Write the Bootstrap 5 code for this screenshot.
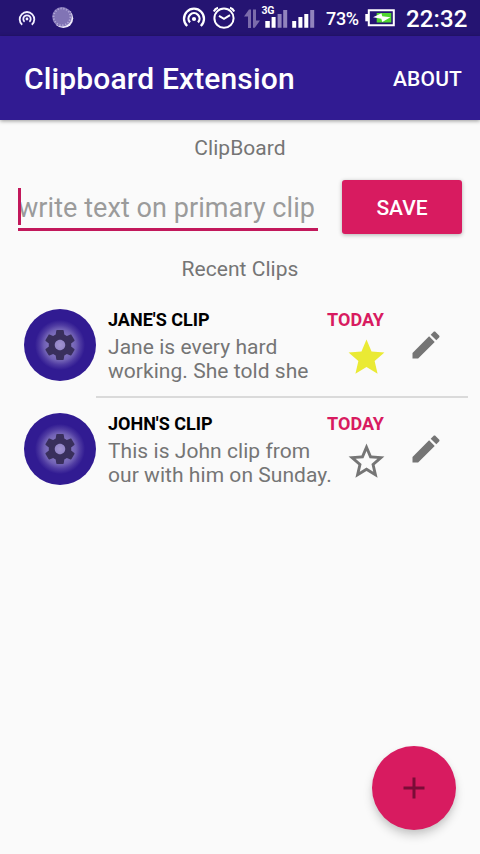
<!DOCTYPE html>
<html lang="en">
<head>
<meta charset="utf-8">
<meta name="viewport" content="width=device-width, initial-scale=1">
<title>Clipboard Extension</title>
<link href="https://cdn.jsdelivr.net/npm/bootstrap@5.3.0/dist/css/bootstrap.min.css" rel="stylesheet">
<style>
  body { font-family: Roboto, "Liberation Sans", sans-serif; background: #fafafa; color: #757575; width: 480px; height: 854px; overflow: hidden; font-size: 21px; line-height: 24px; }
  svg { display: block; flex: none; }
  .status-bar { height: 36px; background: #251472; color: #fff; }
  .status-bar .ico-hotspot { margin-left: 18px; }
  .status-bar .ico-sync { margin-left: 16px; }
  .status-bar .ico-cast { margin-left: 108px; }
  .status-bar .ico-alarm { margin-left: 6px; }
  .status-bar .ico-signal { margin-left: 4px; }
  .battery-pct { font-size: 18px; line-height: 36px; width: 39px; margin-left: 6px; padding-top: 1px; font-weight: 500; white-space: nowrap; letter-spacing: -.3px; }
  .clock { font-size: 24px; line-height: 36px; font-weight: 500; margin-left: 11px; padding-top: 1px; white-space: nowrap; letter-spacing: .1px; }
  .app-bar { height: 84px; background: #311b92; color: #fff; padding: 2px 18px 0 24px; box-shadow: 0 1px 4px rgba(0,0,0,.4); }
  .app-title { font-size: 30px; line-height: 36px; font-weight: 500; letter-spacing: .14px; }
  .about-link { font-weight: 500; color: #fff; letter-spacing: .15px; }
  .section-label { padding-top: 16px; text-align: center; letter-spacing: .04px; }
  .entry-row { padding: 20px 18px 0; height: 97px; }
  .clip-input { width: 300px; height: 51px; padding: 8px 0 0; border: 0; border-bottom: 3px solid #c2185b; border-radius: 0; background: transparent; font-size: 27px; line-height: 40px; letter-spacing: .06px; }
  .clip-input, .clip-input:focus { background: transparent; box-shadow: none; }
  .clip-input::placeholder { color: #9b9b9b; opacity: 1; }
  .caret { left: 0; top: 8px; width: 3px; height: 37px; background: #c2185b; }
  .save-btn { width: 120px; height: 54px; background: #d81b60; color: #fff; border: 0; border-radius: 3px; font-size: 21px; font-weight: 500; padding: 3px 0 0; box-shadow: 0 1px 4px rgba(0,0,0,.3); }
  .recent-list { padding-top: 13px; }
  .clip-row { height: 104px; padding-left: 24px; }
  .avatar { width: 72px; height: 72px; margin-top: 15px; border-radius: 50%; background: radial-gradient(circle, #a294d0 0, #8577c0 10px, #6f5fb4 16px, #4f3ba2 20px, #311b92 25px); }
  .clip-body { height: 104px; border-bottom: 2px solid #dadada; margin-right: 12px; padding-left: 12px; }
  .clip-row:last-child .clip-body { border-color: transparent; }
  .clip-name { font-size: 18px; line-height: 22px; font-weight: 700; color: #000; padding-top: 15px; white-space: nowrap; }
  .clip-text { padding-top: 4px; white-space: nowrap; letter-spacing: .05px; }
  .clip-main { width: 225px; }
  .clip-side { width: 51px; }
  .clip-day { font-size: 18px; line-height: 22px; font-weight: 700; color: #d81b60; padding-top: 15px; }
  .star { margin: 5px -4px 0 0; }
  .pencil { margin: 33px 0 0 24px; }
  .fab { right: 24px; bottom: 24px; width: 84px; height: 84px; background: #d81b60; border: 0; padding: 0; box-shadow: 0 6px 10px rgba(0,0,0,.17), 0 2px 5px rgba(0,0,0,.06); }
</style>
<script src="https://cdn.jsdelivr.net/npm/bootstrap@5.3.0/dist/js/bootstrap.bundle.min.js"></script>
</head>
<body class="position-relative">
<div class="status-bar d-flex align-items-start">
  <svg class="ico-hotspot" width="18" height="36" viewBox="0 0 18 36" fill="none" stroke="#f2efff" stroke-width="1.8"><path d="M4.2 24.8A7.3 7.3 0 1 1 13.8 24.8M6.6 21.8A3.7 3.7 0 1 1 11.4 21.8"/><circle cx="9" cy="19" r="1.4" fill="#f2efff" stroke="none"/></svg>
  <svg class="ico-sync" width="22" height="36" viewBox="0 0 22 36"><circle cx="11.4" cy="18.2" r="9.8" fill="#f0ecfb"/><circle cx="10" cy="16.8" r="9.8" fill="#8174b5"/><circle cx="10" cy="16.8" r="8.4" fill="none" stroke="#b0a6d6" stroke-width="1.8" stroke-dasharray="1.3 1.6"/></svg>
  <svg class="ico-cast" width="24" height="36" viewBox="0 0 24 36" fill="none" stroke="#fff" stroke-width="2.3"><path d="M5.2 26A10 10 0 1 1 18.8 26M8 22.4A5.5 5.5 0 1 1 16 22.4"/><circle cx="12" cy="19" r="2.1" fill="#fff" stroke="none"/></svg>
  <svg class="ico-alarm" width="24" height="36" viewBox="0 0 24 36" fill="none" stroke="#fff" stroke-width="2"><circle cx="12" cy="18.2" r="9.6"/><path d="M7 15.8l5 3 6-3.6M1.8 11.5Q3 8.7 6 7.8M22.2 11.5Q21 8.7 18 7.8"/></svg>
  <svg class="ico-signal" width="80" height="36" viewBox="240 0 80 36"><path d="M244 16.5L249 9.5H251V28H248V16.5ZM253 9.5H256V20.5H260L254.8 27.7H253Z" fill="#7b6cab"/><text x="261.5" y="13.7" font-size="10.5" font-weight="700" font-family="Roboto, sans-serif" fill="#fff" textLength="13">3G</text><g fill="#fff"><path d="M265.3 21h4.5v6.8h-4.5zM271.6 17h4v10.8h-4zM292.2 21h4v6.8h-4zM298.4 17h4v10.8h-4zM304.3 14h4v13.8h-4z"/></g><path d="M277.6 14h4v13.8h-4zM283.2 10h4v17.8h-4zM310.2 10h4v17.8h-4z" fill="#9184bd"/></svg>
  <div class="battery-pct">73%</div>
  <svg width="30" height="36" viewBox="365 0 30 36"><path d="M368.8 10.3h25v15h-25z" fill="none" stroke="#fff" stroke-width="2"/><path d="M365.3 14h2.7v7.3h-2.7z" fill="#fff"/><path d="M376.7 13h14.6v9.5h-14.6z" fill="#50d62f"/><path d="M373 17.2L381.5 13.2 382.2 16.2 390.5 17.2 382.3 22 381.3 18.8Z" fill="#fff"/></svg>
  <div class="clock">22:32</div>
</div>
<nav class="app-bar navbar d-flex flex-nowrap align-items-center justify-content-between position-relative">
  <span class="app-title">Clipboard Extension</span>
  <a class="about-link text-decoration-none" href="#">ABOUT</a>
</nav>
<main>
  <div class="section-label">ClipBoard</div>
  <form class="entry-row d-flex justify-content-between">
    <div class="position-relative">
      <input class="form-control clip-input" type="text" placeholder="write text on primary clip">
      <span class="caret position-absolute"></span>
    </div>
    <button class="btn save-btn" type="button">SAVE</button>
  </form>
  <div class="section-label pt-0">Recent Clips</div>
  <div class="recent-list">
    <div class="clip-row d-flex">
      <div class="avatar d-flex align-items-center justify-content-center flex-shrink-0">
        <svg width="36" height="36" viewBox="0 0 24 24" fill="#392f5c"><path d="M19.43 12.98c.04-.32.07-.64.07-.98s-.03-.66-.07-.98l2.11-1.65c.19-.15.24-.42.12-.64l-2-3.46c-.12-.22-.39-.3-.61-.22l-2.49 1c-.52-.4-1.08-.73-1.69-.98l-.38-2.65C14.46 2.18 14.25 2 14 2h-4c-.25 0-.46.18-.49.42l-.38 2.65c-.61.25-1.17.59-1.69.98l-2.49-1c-.23-.09-.49 0-.61.22l-2 3.46c-.13.22-.07.49.12.64l2.11 1.65c-.04.32-.07.65-.07.98s.03.66.07.98l-2.11 1.65c-.19.15-.24.42-.12.64l2 3.46c.12.22.39.3.61.22l2.49-1c.52.4 1.08.73 1.69.98l.38 2.65c.03.24.24.42.49.42h4c.25 0 .46-.18.49-.42l.38-2.65c.61-.25 1.17-.59 1.69-.98l2.49 1c.23.09.49 0 .61-.22l2-3.46c.12-.22.07-.49-.12-.64l-2.11-1.65zM12 15.5c-1.93 0-3.5-1.57-3.5-3.5s1.57-3.5 3.5-3.5 3.5 1.57 3.5 3.5-1.57 3.5-3.5 3.5z"/></svg>
      </div>
      <div class="clip-body d-flex flex-grow-1">
        <div class="clip-main"><div class="clip-name">JANE'S CLIP</div><div class="clip-text">Jane is every hard<br>working. She told she</div></div>
        <div class="clip-side d-flex flex-column align-items-end">
          <div class="clip-day">TODAY</div>
          <svg class="star" width="43" height="43" viewBox="0 0 24 24" fill="#eaea34"><path d="M12 17.27L18.18 21l-1.64-7.03L22 9.24l-7.19-.61L12 2 9.19 8.63 2 9.24l5.46 4.73L5.82 21z"/></svg>
        </div>
        <svg class="pencil" width="36" height="36" viewBox="0 0 24 24" fill="#757575"><path d="M3 17.25V21h3.75L17.81 9.94l-3.75-3.75L3 17.25zM20.71 7.04c.39-.39.39-1.02 0-1.41l-2.34-2.34c-.39-.39-1.02-.39-1.41 0l-1.83 1.83 3.75 3.75 1.83-1.83z"/></svg>
      </div>
    </div>
    <div class="clip-row d-flex">
      <div class="avatar d-flex align-items-center justify-content-center flex-shrink-0">
        <svg width="36" height="36" viewBox="0 0 24 24" fill="#392f5c"><path d="M19.43 12.98c.04-.32.07-.64.07-.98s-.03-.66-.07-.98l2.11-1.65c.19-.15.24-.42.12-.64l-2-3.46c-.12-.22-.39-.3-.61-.22l-2.49 1c-.52-.4-1.08-.73-1.69-.98l-.38-2.65C14.46 2.18 14.25 2 14 2h-4c-.25 0-.46.18-.49.42l-.38 2.65c-.61.25-1.17.59-1.69.98l-2.49-1c-.23-.09-.49 0-.61.22l-2 3.46c-.13.22-.07.49.12.64l2.11 1.65c-.04.32-.07.65-.07.98s.03.66.07.98l-2.11 1.65c-.19.15-.24.42-.12.64l2 3.46c.12.22.39.3.61.22l2.49-1c.52.4 1.08.73 1.69.98l.38 2.65c.03.24.24.42.49.42h4c.25 0 .46-.18.49-.42l.38-2.65c.61-.25 1.17-.59 1.69-.98l2.49 1c.23.09.49 0 .61-.22l2-3.46c.12-.22.07-.49-.12-.64l-2.11-1.65zM12 15.5c-1.93 0-3.5-1.57-3.5-3.5s1.57-3.5 3.5-3.5 3.5 1.57 3.5 3.5-1.57 3.5-3.5 3.5z"/></svg>
      </div>
      <div class="clip-body d-flex flex-grow-1">
        <div class="clip-main"><div class="clip-name">JOHN'S CLIP</div><div class="clip-text">This is John clip from<br>our with him on Sunday.</div></div>
        <div class="clip-side d-flex flex-column align-items-end">
          <div class="clip-day">TODAY</div>
          <svg class="star" width="43" height="43" viewBox="0 0 24 24" fill="#757575"><path d="M22 9.24l-7.19-.62L12 2 9.19 8.63 2 9.24l5.46 4.73L5.82 21 12 17.27 18.18 21l-1.63-7.03L22 9.24zM12 15.4l-3.76 2.27 1-4.28-3.32-2.88 4.38-.38L12 6.1l1.71 4.04 4.38.38-3.32 2.88 1 4.28L12 15.4z"/></svg>
        </div>
        <svg class="pencil" width="36" height="36" viewBox="0 0 24 24" fill="#757575"><path d="M3 17.25V21h3.75L17.81 9.94l-3.75-3.75L3 17.25zM20.71 7.04c.39-.39.39-1.02 0-1.41l-2.34-2.34c-.39-.39-1.02-.39-1.41 0l-1.83 1.83 3.75 3.75 1.83-1.83z"/></svg>
      </div>
    </div>
  </div>
</main>
<button class="fab btn rounded-circle position-absolute d-flex align-items-center justify-content-center" type="button" aria-label="Add clip">
  <svg width="36" height="36" viewBox="0 0 24 24" fill="#7a0c37"><path d="M19 13h-6v6h-2v-6H5v-2h6V5h2v6h6v2z"/></svg>
</button>
</body>
</html>
